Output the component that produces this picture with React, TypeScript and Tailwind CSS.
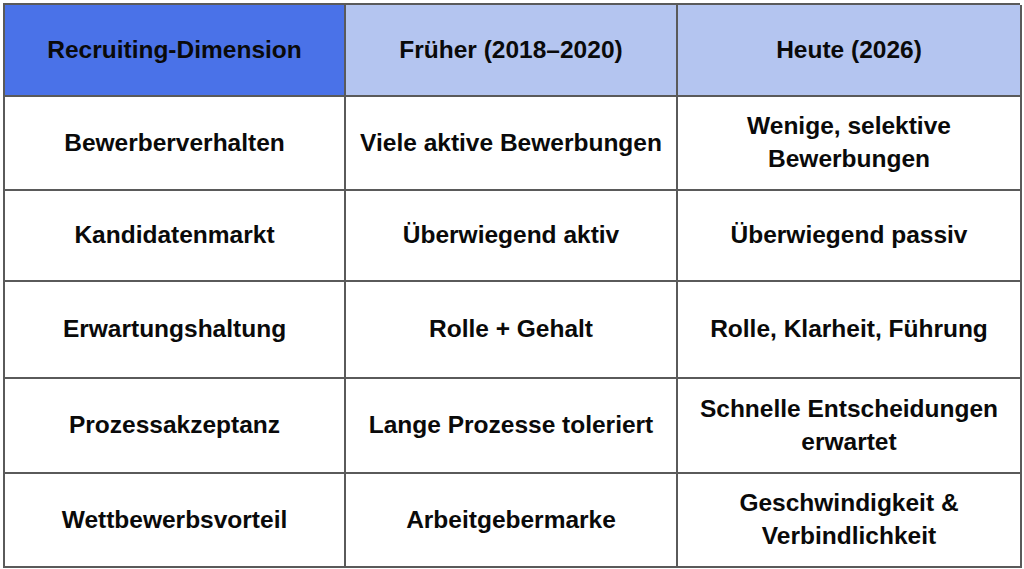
export default function App() {
  const rows = [
    { h: "h-[94px]", a: "Bewerberverhalten", b: "Viele aktive Bewerbungen", c: "Wenige, selektive Bewerbungen" },
    { h: "h-[91px]", a: "Kandidatenmarkt", b: "Überwiegend aktiv", c: "Überwiegend passiv" },
    { h: "h-[97px]", a: "Erwartungshaltung", b: "Rolle + Gehalt", c: "Rolle, Klarheit, Führung" },
    { h: "h-[95px]", a: "Prozessakzeptanz", b: "Lange Prozesse toleriert", c: "Schnelle Entscheidungen erwartet" },
    { h: "h-[94px]", a: "Wettbewerbsvorteil", b: "Arbeitgebermarke", c: "Geschwindigkeit & Verbindlichkeit" },
  ];

  const cell =
    "flex items-center justify-center text-center px-3 pb-[2px] border-r-2 border-b-2 border-[#5a5a5a] leading-[33px]";

  return (
    <div className="w-[1024px] h-[569px] bg-white pt-[3px] pl-[3px] font-['Liberation_Sans',Arial,sans-serif] font-bold text-[24.5px] text-[#0a0a0a]">
      <div className="grid grid-cols-[341px_332px_344px] w-[1017px] border-l-2 border-t-2 border-[#5a5a5a]">
        <div className={`${cell} h-[92px] bg-[#4a72e8]`}>Recruiting-Dimension</div>
        <div className={`${cell} h-[92px] bg-[#b4c5f0]`}>Früher (2018–2020)</div>
        <div className={`${cell} h-[92px] bg-[#b4c5f0]`}>Heute (2026)</div>
        {rows.map((r) => (
          <div key={r.a} className="contents">
            <div className={`${cell} ${r.h}`}>{r.a}</div>
            <div className={`${cell} ${r.h}`}>{r.b}</div>
            <div className={`${cell} ${r.h} px-5`}>{r.c}</div>
          </div>
        ))}
      </div>
    </div>
  );
}
